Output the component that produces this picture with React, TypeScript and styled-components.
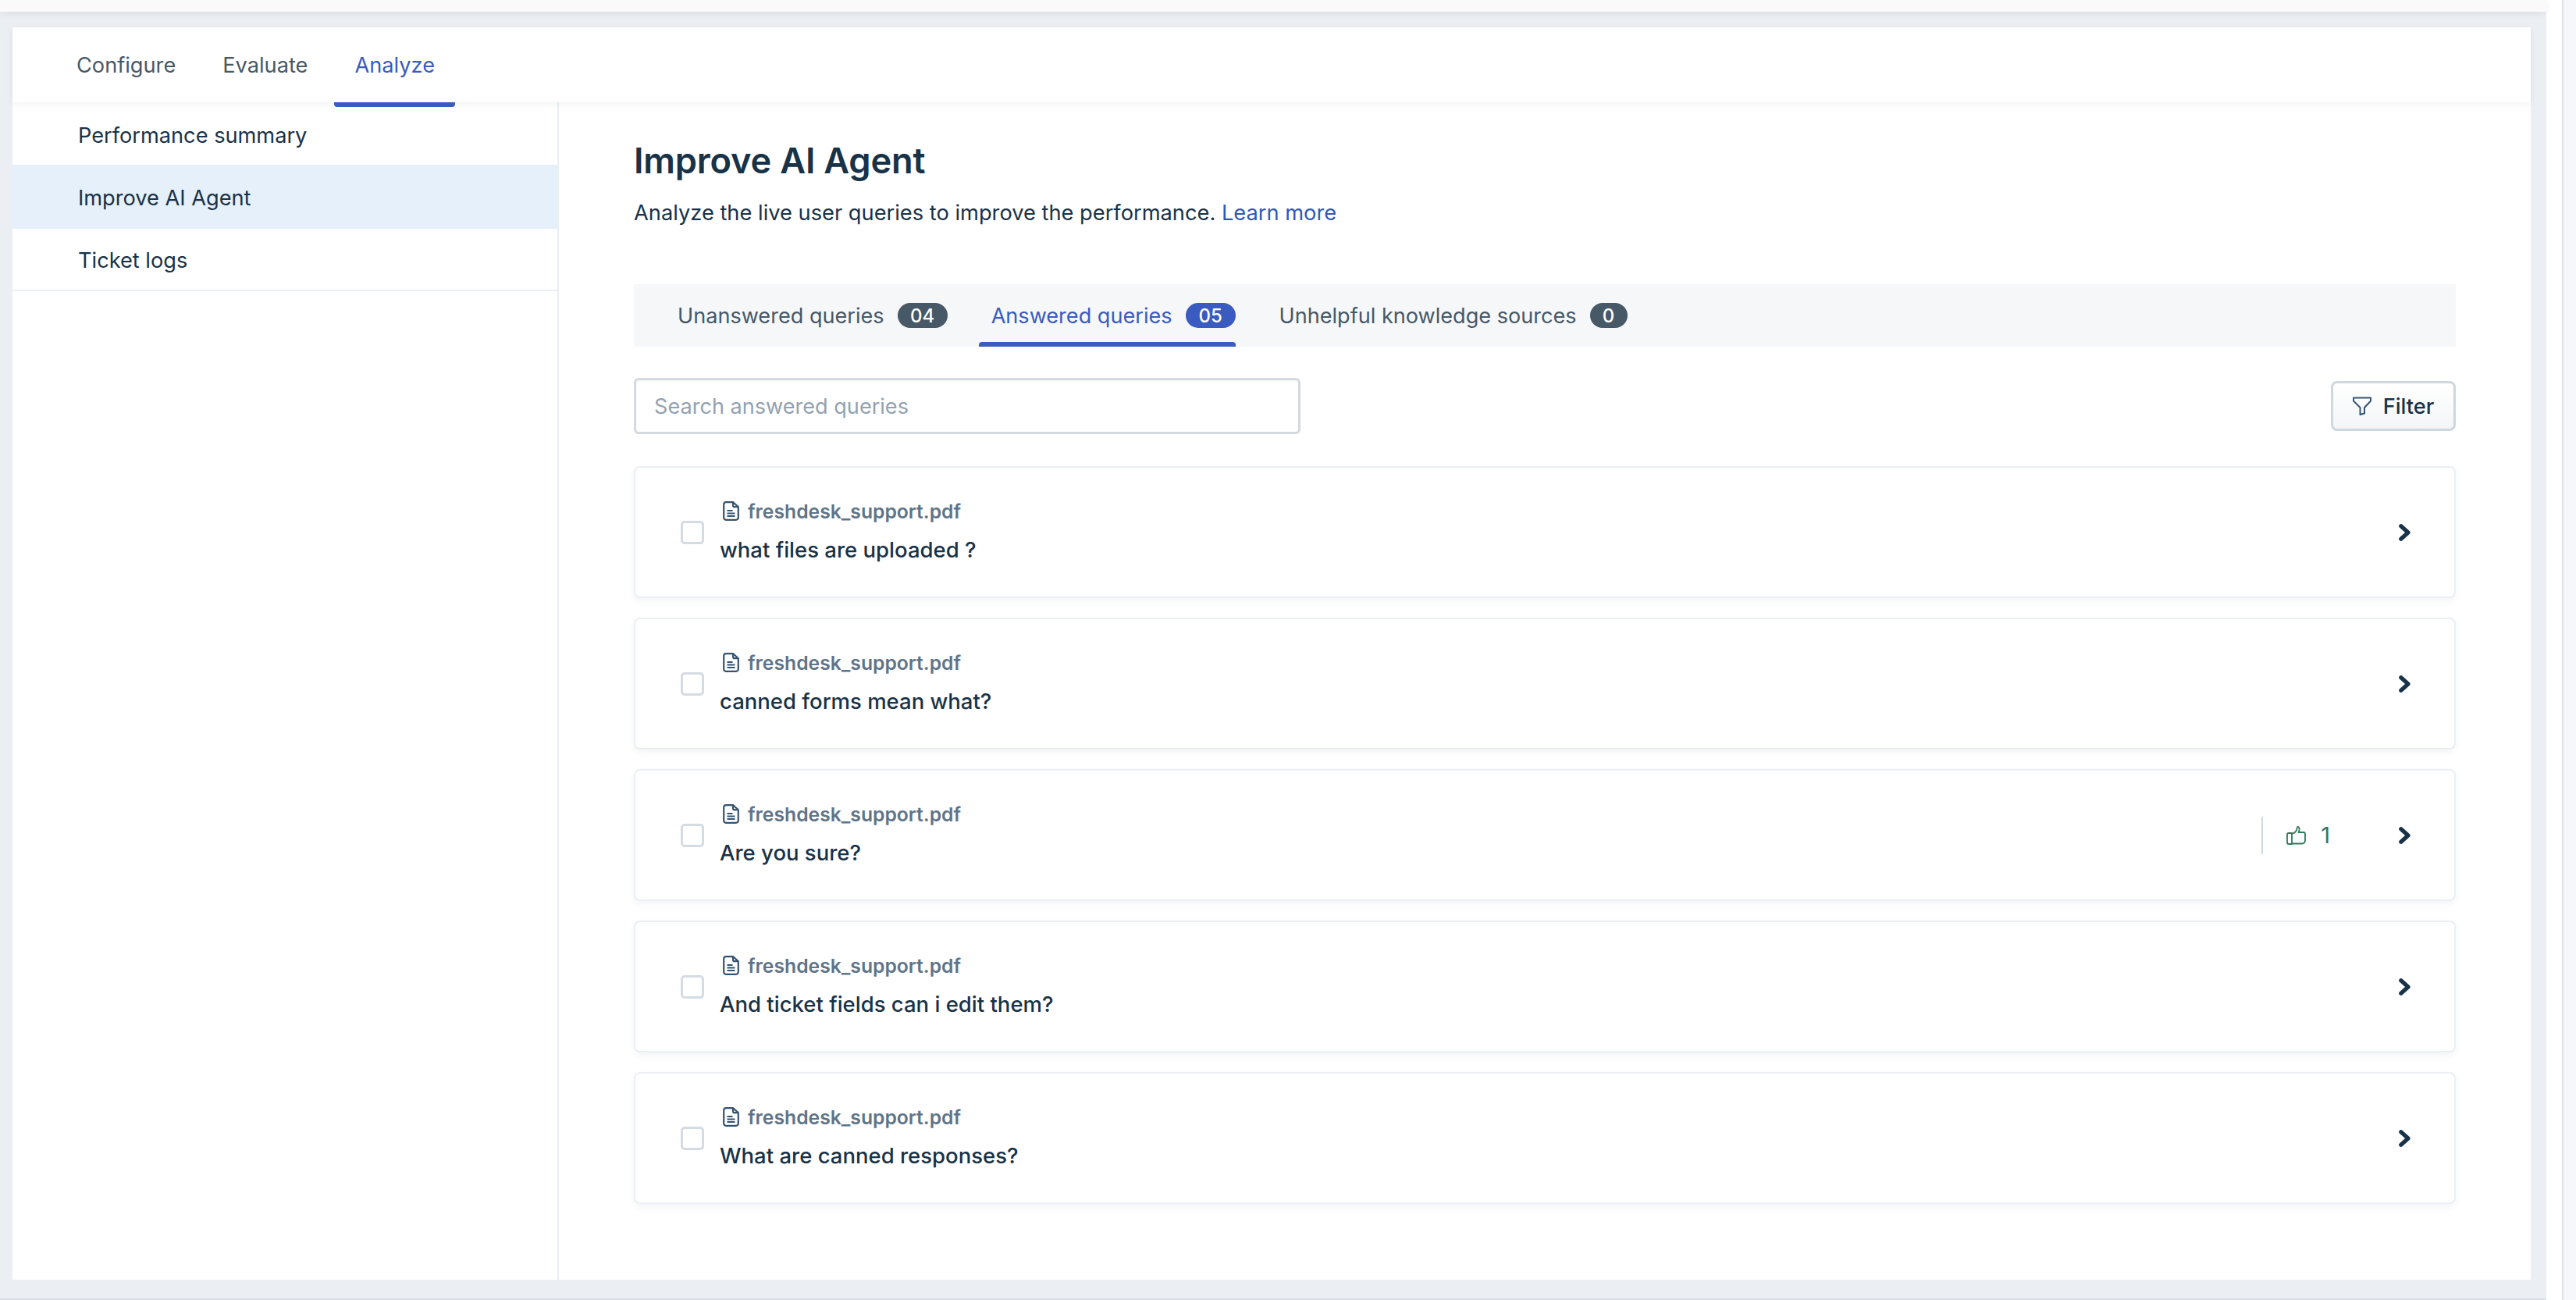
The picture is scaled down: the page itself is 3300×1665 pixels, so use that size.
import React from "react";
import styled, { createGlobalStyle } from "styled-components";

const Global = createGlobalStyle`
  html, body { margin: 0; padding: 0; overflow: hidden; }
  body { font-family: Inter, "Liberation Sans", sans-serif; color: #183247; background: #f5f7fb; }
  * { box-sizing: border-box; }
`;

const Page = styled.div`
  display: flex;
  width: 3300px;
  height: 1665px;
  overflow: hidden;
`;
const Main = styled.div`
  width: 3262px;
  display: flex;
  flex-direction: column;
`;
const TopStrip = styled.div`
  height: 15px;
  background: #fafafa;
  box-shadow: 0 2px 8px rgba(24, 50, 71, 0.08);
  position: relative;
  z-index: 1;
`;
const Canvas = styled.div`
  flex: 1;
  min-height: 0;
  padding: 20px 20px 24px 16px;
  background: #ebeef2;
  display: flex;
  border-bottom: 2px solid #dadfe5;
`;
const Panel = styled.div`
  flex: 1;
  background: #fff;
  display: flex;
  flex-direction: column;
`;
const Header = styled.div`
  height: 96px;
  flex: none;
  display: flex;
  gap: 8px;
  padding-left: 56px;
  box-shadow: 0 2px 8px rgba(24, 50, 71, 0.07);
  position: relative;
  z-index: 1;
`;
const HeaderTab = styled.div<{ $active?: boolean }>`
  position: relative;
  padding: 0 26px;
  display: flex;
  align-items: center;
  font-size: 27.2px;
  color: ${(p) => (p.$active ? "#3a5bbf" : "#475867")};
  ${(p) =>
    p.$active &&
    `&::after {
      content: "";
      position: absolute;
      left: 0;
      right: 0;
      bottom: -6px;
      height: 6px;
      background: #3a5bbf;
      border-radius: 0 0 4px 4px;
    }`}
`;
const Body = styled.div`
  flex: 1;
  min-height: 0;
  display: flex;
`;
const Sidebar = styled.nav`
  width: 700px;
  flex: none;
  border-right: 2px solid #ebeff3;
  padding-top: 2px;
`;
const SideItem = styled.div<{ $active?: boolean; $last?: boolean }>`
  height: ${(p) => (p.$last ? 80 : p.$active ? 82 : 78)}px;
  display: flex;
  align-items: center;
  padding-left: 84px;
  padding-top: 2px;
  font-size: 27.2px;
  color: #183247;
  background: ${(p) => (p.$active ? "#e5f0fa" : "#fff")};
  border-bottom: ${(p) => (p.$last ? "2px solid #ebeff3" : "none")};
`;
const Content = styled.main`
  flex: 1;
  padding: 47px 96px 0 96px;
  min-width: 0;
`;
const Title = styled.h1`
  margin: 0;
  font-size: 45.2px;
  line-height: 56px;
  font-weight: 600;
  letter-spacing: -0.2px;
  color: #183247;
`;
const Lead = styled.p`
  margin: 19px 0 0;
  font-size: 27.26px;
  line-height: 40px;
  color: #183247;
`;
const LearnLink = styled.span`
  color: #2f57bb;
`;
const TabBar = styled.div`
  margin-top: 71px;
  height: 80px;
  background: #f5f7f9;
  display: flex;
  gap: 40px;
  padding-left: 40px;
`;
const QueryTab = styled.div<{ $active?: boolean }>`
  position: relative;
  padding-left: 16px;
  display: flex;
  align-items: center;
  gap: 17px;
  font-size: 27.1px;
  color: ${(p) => (p.$active ? "#3a5bbf" : "#475867")};
  ${(p) =>
    p.$active &&
    `&::after {
      content: "";
      position: absolute;
      left: 0;
      right: 0;
      bottom: 0;
      height: 6px;
      background: #3a5bbf;
      border-radius: 4px 4px 0 0;
    }`}
`;
const Count = styled.span<{ $active?: boolean; $small?: boolean }>`
  height: 32px;
  min-width: ${(p) => (p.$small ? 48 : 64)}px;
  border-radius: 16px;
  background: ${(p) => (p.$active ? "#3a5bbf" : "#475867")};
  color: #fff;
  font-size: 24px;
  font-weight: 500;
  display: flex;
  align-items: center;
  justify-content: center;
`;
const Toolbar = styled.div`
  margin-top: 40px;
  height: 72px;
  display: flex;
  align-items: center;
  justify-content: space-between;
`;
const Search = styled.div`
  width: 854px;
  height: 72px;
  border: 3px solid #d3d9e0;
  border-radius: 6px;
  display: flex;
  align-items: center;
  padding-left: 23px;
  font-size: 27.1px;
  color: #92a2b1;
  box-shadow: inset 0 2px 3px rgba(24, 50, 71, 0.04);
`;
const FilterButton = styled.div`
  width: 160px;
  height: 64px;
  border: 3px solid #cfd7df;
  border-radius: 8px;
  background: linear-gradient(#fff, #f3f5f7);
  display: flex;
  align-items: center;
  justify-content: center;
  gap: 15px;
  font-size: 27.2px;
  font-weight: 500;
  color: #183247;
`;
const CardList = styled.div`
  margin-top: 41px;
  display: flex;
  flex-direction: column;
  gap: 25px;
`;
const Card = styled.article`
  height: 169px;
  border: 2px solid #ebeff3;
  border-radius: 8px;
  background: #fff;
  box-shadow: 0 4px 10px rgba(24, 50, 71, 0.05);
  display: flex;
  align-items: center;
  padding: 0 56px 0 58px;
`;
const Check = styled.span`
  width: 30px;
  height: 30px;
  flex: none;
  border: 3px solid #d5dbe3;
  border-radius: 5px;
`;
const CardText = styled.div`
  margin-left: 20px;
  flex: 1;
  min-width: 0;
  display: flex;
  flex-direction: column;
  gap: 14px;
`;
const Source = styled.div`
  display: flex;
  align-items: center;
  gap: 11px;
  padding-left: 4px;
  height: 30px;
  font-size: 24.7px;
  font-weight: 600;
  color: #5f7488;
`;
const Query = styled.div`
  font-size: 27.5px;
  line-height: 40px;
  font-weight: 500;
  color: #183247;
`;
const Feedback = styled.div`
  height: 48px;
  border-left: 2px solid #cfd7df;
  display: flex;
  align-items: center;
  padding-left: 30px;
  gap: 19px;
  margin-right: 88px;
  font-size: 29px;
  color: #2f7a5a;
`;
const Strip = styled.div`
  flex: 1;
  display: flex;
  background: #fff;
`;
const StripGap = styled.div`
  width: 20px;
  height: 1663px;
`;
const StripRail = styled.div`
  flex: 1;
  background: #f5f7fb;
  border-left: 2px solid #dfe2ea;
`;

const DocIcon = () => (
  <svg width="21" height="25" viewBox="0 0 21 25" fill="none" stroke="#345471" strokeWidth="2.200">
    <path d="M4 1.200h9l6.800 6V21a3 3 0 0 1-3 2.800H4A3 3 0 0 1 1.200 21V4A3 3 0 0 1 4 1.200z" />
    <path d="M13 1.200v4a2 2 0 0 0 2 2h4.800" />
    <path d="M5.500 12h7M5.500 15.500h10M5.500 19h10" />
  </svg>
);
const FilterIcon = () => (
  <svg width="24" height="24" viewBox="0 0 24 24" fill="none" stroke="#345471" strokeWidth="2" strokeLinejoin="round">
    <path d="M1 1.500h22v4l-8 8.500v7.500l-5.500 1.500v-9L1 5.500z" />
  </svg>
);
const Thumb = () => (
  <svg width="25" height="24" viewBox="0 0 25 24" fill="none" stroke="#2f7a5a" strokeWidth="1.800" strokeLinejoin="round" strokeLinecap="round">
    <path d="M7 9H2.500A1.500 1.500 0 0 0 1 10.500v10.500A2 2 0 0 0 3 23h4z" />
    <path d="M7 10c3-1 6-3.500 6.500-6.500.2-1.500.5-2.700 1.500-2.500 1.800.4 2.200 3 .6 7h6.400c1.300 0 2 1 2 2.500V18c0 3-1.500 4.500-4 4.500H7" />
  </svg>
);
const Chevron = () => (
  <svg width="15" height="22" viewBox="0 0 15 22" fill="none" stroke="#183247" strokeWidth="5.200" strokeLinecap="round" strokeLinejoin="round">
    <path d="M2.800 2.800l9.200 8.200-9.200 8.200" />
  </svg>
);

const queries = [
  { text: "what files are uploaded ?" },
  { text: "canned forms mean what?" },
  { text: "Are you sure?", likes: 1 },
  { text: "And ticket fields can i edit them?" },
  { text: "What are canned responses?" },
];

export default function App() {
  return (
    <Page>
      <Global />
      <Main>
        <TopStrip />
        <Canvas>
          <Panel>
            <Header>
              <HeaderTab>Configure</HeaderTab>
              <HeaderTab>Evaluate</HeaderTab>
              <HeaderTab $active>Analyze</HeaderTab>
            </Header>
            <Body>
              <Sidebar>
                <SideItem>Performance summary</SideItem>
                <SideItem $active>Improve AI Agent</SideItem>
                <SideItem $last>Ticket logs</SideItem>
              </Sidebar>
              <Content>
                <Title>Improve AI Agent</Title>
                <Lead>
                  Analyze the live user queries to improve the performance. <LearnLink>Learn more</LearnLink>
                </Lead>
                <TabBar>
                  <QueryTab>
                    Unanswered queries <Count>04</Count>
                  </QueryTab>
                  <QueryTab $active>
                    Answered queries <Count $active>05</Count>
                  </QueryTab>
                  <QueryTab>
                    Unhelpful knowledge sources <Count $small>0</Count>
                  </QueryTab>
                </TabBar>
                <Toolbar>
                  <Search>Search answered queries</Search>
                  <FilterButton>
                    <FilterIcon />
                    Filter
                  </FilterButton>
                </Toolbar>
                <CardList>
                  {queries.map((q) => (
                    <Card key={q.text}>
                      <Check />
                      <CardText>
                        <Source>
                          <DocIcon />
                          freshdesk_support.pdf
                        </Source>
                        <Query>{q.text}</Query>
                      </CardText>
                      {q.likes ? (
                        <Feedback>
                          <Thumb />
                          {q.likes}
                        </Feedback>
                      ) : null}
                      <Chevron />
                    </Card>
                  ))}
                </CardList>
              </Content>
            </Body>
          </Panel>
        </Canvas>
      </Main>
      <Strip>
        <StripGap />
        <StripRail />
      </Strip>
    </Page>
  );
}
